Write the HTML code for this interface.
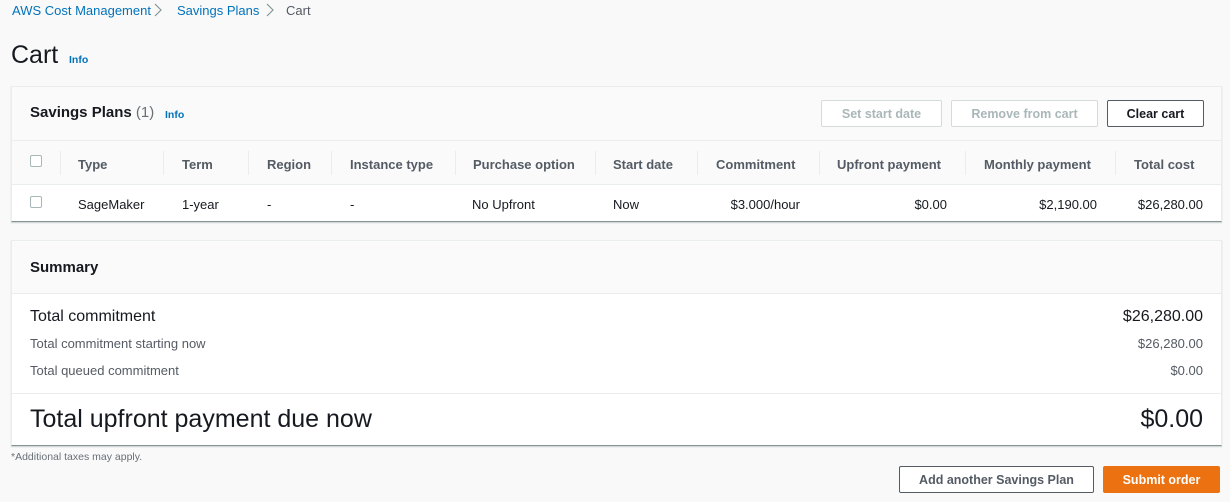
<!DOCTYPE html>
<html><head><style>
*{box-sizing:border-box;margin:0;padding:0}
body{width:1230px;height:502px;background:#f9f9f9;font-family:"Liberation Sans",sans-serif;color:#16191f;position:relative;overflow:hidden;font-size:13px}
.a{position:absolute;white-space:nowrap}
.b{font-weight:bold}
.link{color:#0073bb}
.panel{position:absolute;left:11px;width:1211px;border:1px solid #eaeded;border-bottom:1px solid #879596;background:#fff;box-shadow:0 1px 1px rgba(0,28,36,.2)}
.btn{position:absolute;height:27px;border:1px solid #545b64;border-radius:2px;font-weight:bold;font-size:12.5px;display:flex;align-items:center;justify-content:center;background:#fff;color:#545b64}
.dis{border-color:#d5dbdb;color:#aab7b8}
.cb{position:absolute;width:12px;height:12px;border:1px solid #aab7b8;border-radius:2px;background:#fff}
.sep{position:absolute;top:151px;width:1px;height:24px;background:#eaeded}
.r{text-align:right}
</style></head><body>
<div class="a link" style="left:12px;top:3px">AWS Cost Management</div>
<svg class="a" style="left:153px;top:3px" width="10" height="14"><path d="M2 1l6 6-6 6" stroke="#879596" fill="none" stroke-width="1.2"/></svg>
<div class="a link" style="left:177px;top:3px">Savings Plans</div>
<svg class="a" style="left:265px;top:3px" width="10" height="14"><path d="M2 1l6 6-6 6" stroke="#879596" fill="none" stroke-width="1.2"/></svg>
<div class="a" style="left:286px;top:3px;color:#545b64">Cart</div>
<div class="a" style="left:11px;top:41px;font-size:25px">Cart</div>
<div class="a link b" style="left:69px;top:54px;font-size:10.5px">Info</div>

<div class="panel" style="top:86px;height:136px">
  <div style="position:absolute;left:0;top:0;width:100%;height:98px;background:#fafafa;border-bottom:1px solid #eaeded"></div>
  <div style="position:absolute;left:0;top:53px;width:100%;height:1px;background:#eaeded"></div>
</div>
<div class="a b" style="left:30px;top:104px;font-size:15px">Savings Plans <span style="font-weight:normal;color:#687078">(1)</span></div>
<div class="a link b" style="left:165px;top:109px;font-size:10.5px">Info</div>
<div class="btn dis" style="left:821px;top:100px;width:121px">Set start date</div>
<div class="btn dis" style="left:951px;top:100px;width:147px">Remove from cart</div>
<div class="btn" style="left:1107px;top:100px;width:97px;color:#16191f">Clear cart</div>
<div class="cb" style="left:30px;top:155px"></div>
<div class="sep" style="left:60px"></div><div class="sep" style="left:163px"></div><div class="sep" style="left:248px"></div><div class="sep" style="left:331px"></div><div class="sep" style="left:455px"></div><div class="sep" style="left:595px"></div><div class="sep" style="left:697px"></div><div class="sep" style="left:819px"></div><div class="sep" style="left:965px"></div><div class="sep" style="left:1115px"></div>
<div class="a b" style="left:78px;top:157px;color:#545b64">Type</div>
<div class="a b" style="left:182px;top:157px;color:#545b64">Term</div>
<div class="a b" style="left:267px;top:157px;color:#545b64">Region</div>
<div class="a b" style="left:350px;top:157px;color:#545b64">Instance type</div>
<div class="a b" style="left:473px;top:157px;color:#545b64">Purchase option</div>
<div class="a b" style="left:613px;top:157px;color:#545b64">Start date</div>
<div class="a b" style="left:716px;top:157px;color:#545b64">Commitment</div>
<div class="a b" style="left:837px;top:157px;color:#545b64">Upfront payment</div>
<div class="a b" style="left:984px;top:157px;color:#545b64">Monthly payment</div>
<div class="a b" style="left:1134px;top:157px;color:#545b64">Total cost</div>
<div class="cb" style="left:30px;top:196px"></div>
<div class="a" style="left:78px;top:197px">SageMaker</div>
<div class="a" style="left:182px;top:197px">1-year</div>
<div class="a" style="left:267px;top:197px">-</div>
<div class="a" style="left:350px;top:197px">-</div>
<div class="a" style="left:472px;top:197px">No Upfront</div>
<div class="a" style="left:613px;top:197px">Now</div>
<div class="a r" style="right:430px;top:197px">$3.000/hour</div>
<div class="a r" style="right:283px;top:197px">$0.00</div>
<div class="a r" style="right:133px;top:197px">$2,190.00</div>
<div class="a r" style="right:27px;top:197px">$26,280.00</div>

<div class="panel" style="top:240px;height:206px">
  <div style="position:absolute;left:0;top:0;width:100%;height:53px;background:#fafafa;border-bottom:1px solid #eaeded"></div>
  <div style="position:absolute;left:0;top:152px;width:100%;height:1px;background:#eaeded"></div>
</div>
<div class="a b" style="left:30px;top:259px;font-size:15px">Summary</div>
<div class="a" style="left:30px;top:308px;font-size:16px">Total commitment</div>
<div class="a r" style="right:27px;top:308px;font-size:16px">$26,280.00</div>
<div class="a" style="left:30px;top:336px;color:#545b64">Total commitment starting now</div>
<div class="a r" style="right:27px;top:336px;color:#545b64">$26,280.00</div>
<div class="a" style="left:30px;top:363px;color:#545b64">Total queued commitment</div>
<div class="a r" style="right:27px;top:363px;color:#545b64">$0.00</div>
<div class="a" style="left:30px;top:405px;font-size:25px">Total upfront payment due now</div>
<div class="a r" style="right:27px;top:405px;font-size:25px">$0.00</div>
<div class="a" style="left:11px;top:451px;font-size:10.5px;color:#687078">*Additional taxes may apply.</div>
<div class="btn" style="left:899px;top:466px;width:195px">Add another Savings Plan</div>
<div class="btn" style="left:1103px;top:466px;width:117px;background:#ec7211;border-color:#ec7211;color:#fff">Submit order</div>
</body></html>
